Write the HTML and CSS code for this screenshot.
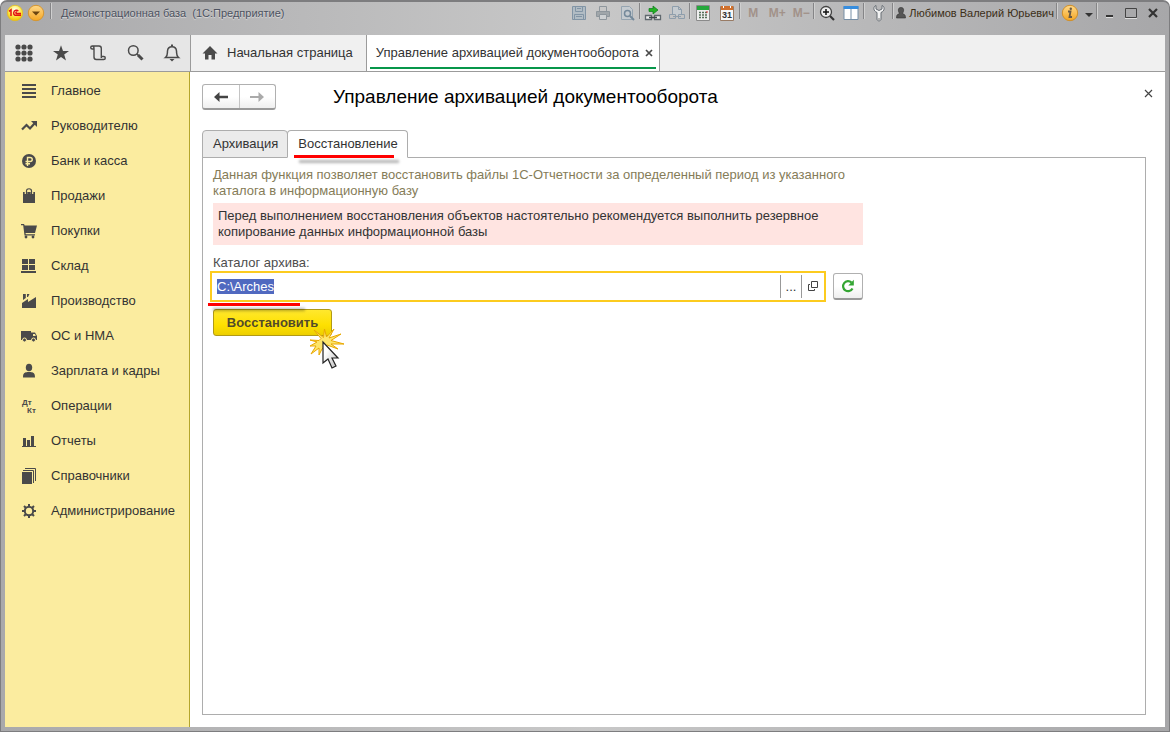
FILE: index.html
```html
<!DOCTYPE html>
<html lang="ru">
<head>
<meta charset="utf-8">
<title>Демонстрационная база (1С:Предприятие)</title>
<link rel="stylesheet" href="styles.css">
</head>
<body>
<div class="window">
  <header class="titlebar">
    <button class="tb-btn logo" aria-label="1С"><svg width="18" height="18" viewBox="0 0 18 18"><defs><radialGradient id="y" cx=".5" cy=".3" r=".7"><stop offset="0" stop-color="#fff"/><stop offset=".5" stop-color="#ffee58"/><stop offset="1" stop-color="#f0c000"/></radialGradient><linearGradient id="o" x2="0" y2="1"><stop offset="0" stop-color="#ffd98a"/><stop offset="1" stop-color="#f5a623"/></linearGradient></defs><circle cx="9" cy="9" r="7.7" fill="url(#y)" stroke="#e6bd20" stroke-width=".8"/><path d="M3 7.4L5 5.8V12M12.2 7.2C11.600 5.900 8 5.600 7.700 8.700C7.600 11 9 11.300 10 11.300H15M10.900 8.200C9.800 7.700 9.400 9.500 10.500 9.500H15" fill="none" stroke="#e31313" stroke-width="1.500"/></svg></button>
    <button class="tb-btn" aria-label="Меню"><svg width="18" height="18" viewBox="0 0 18 18"><circle cx="9" cy="9" r="7.700" fill="url(#o)" stroke="#d49632"/><path d="M5 7.500h8l-4 4z" fill="#6b4410"/></svg></button>
    <i class="sep"></i>
    <span class="app-title">Демонстрационная база&nbsp; (1С:Предприятие)</span>
    <div class="tools">
      <button class="tb-btn" aria-label="Сохранить"><svg width="16" height="16" viewBox="0 0 16 16" fill="none" stroke="#8194a5"><path d="M1.500 1.500h13v13h-13z" fill="#b1bcc4"/><path d="M4.500 1.500h7v5h-7zM3.500 9.500h9v5h-9zM5 11.500h6M6 3.500h4"/></svg></button>
      <button class="tb-btn" aria-label="Печать"><svg width="16" height="16" viewBox="0 0 16 16" fill="none" stroke="#8e969c"><path d="M4.500 6V1.500h7V6"/><path d="M1.500 6.500h13v5h-13z" fill="#a0a6aa"/><path d="M4.500 9.500h7v5h-7z" fill="#ced1d3"/></svg></button>
      <button class="tb-btn" aria-label="Просмотр"><svg width="16" height="16" viewBox="0 0 16 16" fill="none" stroke="#95a4b0"><path d="M2.500 1.500h8l3 3v10h-11z" fill="#c5cbd0"/><circle cx="8.500" cy="8.500" r="3" stroke="#74899a" stroke-width="1.500"/><path d="M11 11l4 4" stroke="#74899a" stroke-width="2"/></svg></button>
      <i class="sep"></i>
      <button class="tb-btn" aria-label="Перейти по ссылке"><svg width="18" height="16" viewBox="0 0 18 16" fill="none"><path d="M5 3.500h4V1l5 4-5 4V6.500H5z" fill="#24b324" stroke="#0a7a1b" stroke-width=".7"/><path d="M1.500 10.500h6v4h-6zM10.500 10.500h6v4h-6z" fill="#eee" stroke="#60686e" stroke-width="1.300"/><path d="M5 12.500h8" stroke="#40474c" stroke-width="1.500"/></svg></button>
      <button class="tb-btn" aria-label="Получить ссылку"><svg width="18" height="16" viewBox="0 0 18 16" fill="none" stroke="#8e9eac"><path d="M4.500 10V1.500h6l3 3V10M10.500 1.500v3h3" fill="#c5cbd0"/><path d="M1.500 9.500h6v4h-6zM10.500 9.500h6v4h-6zM5 11.500h8"/></svg></button>
      <i class="sep"></i>
      <button class="tb-btn" aria-label="Калькулятор"><svg width="14" height="16" viewBox="0 0 14 16"><path d="M.500.500h13v15H.500z" fill="#eee" stroke="#8a8a8a"/><path d="M1 1h12v4H1z" fill="#26a83c"/><path d="M3 7.500h8M3 10h8M3 12.500h8" stroke="#55705a" stroke-width="1.500" stroke-dasharray="2 1"/><path d="M10 7h2" stroke="#d33"/></svg></button>
      <button class="tb-btn" aria-label="Календарь"><svg width="14" height="16" viewBox="0 0 14 16"><path d="M.500 1.500h13v14H.500z" fill="#f7f7f7" stroke="#987b65"/><path d="M1 1h12v4H1z" fill="#d0702c"/><path d="M3.500 1v2M10.500 1v2" stroke="#fff"/><text x="7" y="13" text-anchor="middle" class="cal-num">31</text></svg></button>
      <i class="sep"></i>
      <button class="tb-btn mem">M</button><button class="tb-btn mem">M+</button><button class="tb-btn mem">M−</button>
      <i class="sep"></i>
      <button class="tb-btn" aria-label="Масштаб"><svg width="16" height="16" viewBox="0 0 16 16" fill="none"><circle cx="7" cy="7" r="5.500" fill="#eee" stroke="#444" stroke-width="1.300"/><path d="M11 11l4 4" stroke="#333" stroke-width="2.200"/><path d="M4 7h6M7 4v6" stroke="#111" stroke-width="1.500"/></svg></button>
      <button class="tb-btn" aria-label="Панели"><svg width="16" height="16" viewBox="0 0 16 16"><path d="M1 1.500h14v13H1z" fill="#fff" stroke="#778fa6"/><path d="M.500 1h15v3H.500z" fill="#368dde"/><path d="M8 4v11" stroke="#778fa6"/></svg></button>
      <i class="sep"></i>
      <button class="tb-btn wrench" aria-label="Сервис"><svg width="14" height="18" viewBox="0 0 14 18"><path d="M4 1.500C1 2.500 1 7 5 8.500V15c0 2.500 4 2.500 4 0V8.500C13 7 13 2.500 10 1.500V5L7 6.500 4 5z" fill="#f2f2f2" stroke="#666c73"/><circle cx="7" cy="15" r=".8" fill="#666"/></svg></button>
      <i class="sep"></i>
      <button class="tb-btn user"><svg width="10" height="12" viewBox="0 0 10 12"><path d="M5 .5c4 0 2.500 4.500 1.500 6 1.500 1 3 .5 3 4.500h-9c0-4 1.500-3.500 3-4.500-1-1.500-2.500-6 1.500-6z" fill="#555" stroke="#333" stroke-width=".6"/></svg>Любимов Валерий Юрьевич</button>
      <i class="sep"></i>
      <button class="tb-btn" aria-label="Справка"><svg width="18" height="18" viewBox="0 0 18 18"><circle cx="9" cy="9" r="7.700" fill="url(#o)" stroke="#cf8f2a"/><path d="M7 7.500h2.500L8.500 13h2.500" fill="none" stroke="#6a5a45" stroke-width="1.800"/><circle cx="9.800" cy="4.800" r="1.200" fill="#6a5a45"/></svg></button>
      <button class="tb-btn drop" aria-label="Ещё"><svg width="8" height="4" viewBox="0 0 8 4"><path d="M0 0h8L4 4z" fill="#333"/></svg></button>
      <i class="sep"></i>
      <button class="tb-btn win" aria-label="Свернуть"><svg width="12" height="12" viewBox="0 0 12 12"><path d="M3 9h7" stroke="#333" stroke-width="2"/><path d="M3 10.500h7" stroke="#ddd"/></svg></button>
      <button class="tb-btn win" aria-label="Развернуть"><svg width="12" height="12" viewBox="0 0 12 12"><path d="M.500 1.500h11v9H.500z" fill="none" stroke="#444"/><path d="M0 11.500h12" stroke="#ddd"/></svg></button>
      <button class="tb-btn win" aria-label="Закрыть"><svg width="12" height="12" viewBox="0 0 12 12"><path d="M2 2l8 8M10 2l-8 8" stroke="#333" stroke-width="2.200"/></svg></button>
    </div>
  </header>

  <div class="topbar">
    <div class="quick">
      <button aria-label="Меню функций"><svg width="18" height="18" viewBox="0 0 18 18" fill="#4a4a4a"><circle cx="3" cy="3" r="2.600"/><circle cx="9" cy="3" r="2.600"/><circle cx="15" cy="3" r="2.600"/><circle cx="3" cy="9" r="2.600"/><circle cx="9" cy="9" r="2.600"/><circle cx="15" cy="9" r="2.600"/><circle cx="3" cy="15" r="2.600"/><circle cx="9" cy="15" r="2.600"/><circle cx="15" cy="15" r="2.600"/></svg></button>
      <button aria-label="Избранное"><svg width="18" height="18" viewBox="0 0 18 18"><path d="M9 1.200l2 5.800h6l-4.800 3.600L14 16.500 9 13l-5 3.500 1.800-5.900L1 7h6z" fill="#4a4a4a"/></svg></button>
      <button aria-label="История"><svg width="18" height="18" viewBox="0 0 18 18" fill="none" stroke="#4a4a4a" stroke-width="1.400"><path d="M5 5H3.300C1.200 5 1.200 2 3.300 2H10c1.700 0 2.300.900 2.300 2.500V12.500M3.300 2C4.700 2 5 3 5 4.500V13c0 1.700.700 2.500 2.300 2.500H14.700c2.100 0 2.100-3 0-3h-2.400v1.500"/></svg></button>
      <button aria-label="Поиск"><svg width="18" height="18" viewBox="0 0 18 18" fill="none" stroke="#4a4a4a"><circle cx="7.300" cy="6.500" r="4.800" stroke-width="1.500"/><path d="M11 10l2 2" stroke-width="1.500"/><path d="M12 11l4.500 4.500" stroke-width="3"/></svg></button>
      <button aria-label="Уведомления"><svg width="18" height="18" viewBox="0 0 18 18" fill="none" stroke="#4a4a4a" stroke-width="1.500"><path d="M2.500 13.500C5 11.500 4.200 9.500 4.500 7 4.700 4 6.500 2.700 9 2.700S13.300 4 13.500 7c.3 2.500-.5 4.500 2 6.500z"/><path d="M9 .500v2" stroke-width="2"/><path d="M6.500 15h5L9 17.500z" fill="#4a4a4a" stroke="none"/></svg></button>
    </div>
    <nav class="page-tabs">
      <button class="page-tab home"><svg width="16" height="14" viewBox="0 0 16 14"><path d="M8 0l7.500 7.500H13V13.500H9.500V9h-3v4.500H3V7.500H.500z" fill="#4a4a4a"/></svg>Начальная страница</button>
      <div class="page-tab current"><span>Управление архивацией документооборота</span><button aria-label="Закрыть вкладку"><svg width="8" height="8" viewBox="0 0 8 8"><path d="M1 1l6 6M7 1L1 7" stroke="#4a4a4a" stroke-width="1.700"/></svg></button></div>
    </nav>
  </div>

  <div class="body">
    <nav class="sidebar">
      <a href="#"><svg viewBox="0 0 16 16"><path d="M1 2h14M1 6h14M1 10h14M1 14h14" stroke="#4a4a4a" stroke-width="2"/></svg>Главное</a>
      <a href="#"><svg viewBox="0 0 16 16"><path d="M1 11.500l4.500-4.500 3.500 3.500 4.500-5" fill="none" stroke="#4a4a4a" stroke-width="2.200"/><path d="M10 3h6v6z" fill="#4a4a4a"/></svg>Руководителю</a>
      <a href="#"><svg viewBox="0 0 16 16"><circle cx="8" cy="8" r="7" fill="#4a4a4a"/><path d="M6.500 13V4.500H9c3 0 3 4 0 4H4.500M4.500 10.800H9" fill="none" stroke="#fbec9f" stroke-width="1.400"/></svg>Банк и касса</a>
      <a href="#"><svg viewBox="0 0 16 16"><path d="M2 4h12v11H2z" fill="#4a4a4a"/><path d="M5 6V3.500C5 0 11 0 11 3.500V6" fill="none" stroke="#fbec9f" stroke-width="2.600"/><path d="M5.500 6V3C5.500 0 10.500 0 10.500 3V6" fill="none" stroke="#4a4a4a" stroke-width="1.200"/></svg>Продажи</a>
      <a href="#"><svg viewBox="0 0 16 16"><path d="M0 1h3l.7 1.500H16L14 10H4.500l.3 1.200H14V12.500H3.500L2.200 2.200H0z" fill="#4a4a4a"/><circle cx="5" cy="14" r="1.400" fill="#4a4a4a"/><circle cx="12" cy="14" r="1.400" fill="#4a4a4a"/></svg>Покупки</a>
      <a href="#"><svg viewBox="0 0 16 16"><path d="M1 1h6v5H1zM8 1h6v5H8zM1 7h6v5H1zM8 7h6v5H8zM0 13h15v2H0z" fill="#4a4a4a"/></svg>Склад</a>
      <a href="#"><svg viewBox="0 0 16 16"><path d="M1 15V10l6-4V9l8-5V15z" fill="#4a4a4a"/><path d="M2 1h2.800v4L2 7zM6 1h2.500L7 4H6z" fill="#4a4a4a"/></svg>Производство</a>
      <a href="#"><svg viewBox="0 0 16 16"><path d="M0 3h10v9H0zM10 4.500H14L16 8v4h-6z" fill="#4a4a4a"/><path d="M12 6h2l.8 2H12z" fill="#fbec9f"/><circle cx="3.500" cy="12" r="2" fill="#4a4a4a" stroke="#fbec9f"/><circle cx="12.500" cy="12" r="2" fill="#4a4a4a" stroke="#fbec9f"/></svg>ОС и НМА</a>
      <a href="#"><svg viewBox="0 0 16 16"><ellipse cx="8" cy="4.500" rx="3.200" ry="3.800" fill="#4a4a4a"/><path d="M2 14.500c0-5 2-5 4.500-5.500h3c2.500.500 4.500.500 4.500 5.500z" fill="#4a4a4a"/></svg>Зарплата и кадры</a>
      <a href="#"><svg viewBox="0 0 16 16" class="dtkt"><text x="1" y="7">Дт</text><text x="6" y="15">Кт</text></svg>Операции</a>
      <a href="#"><svg viewBox="0 0 16 16"><path d="M1 13h14v1H1zM2 5h3v9H2zM6 7h3v7H6zM10 3h3v11h-3z" fill="#4a4a4a"/></svg>Отчеты</a>
      <a href="#"><svg viewBox="0 0 16 16"><path d="M1 4h10v12H1z" fill="#4a4a4a"/><path d="M2 2.500h10.500V15M4 .500h10.500V13" fill="none" stroke="#4a4a4a"/></svg>Справочники</a>
      <a href="#"><svg viewBox="0 0 16 16" fill="none" stroke="#4a4a4a"><circle cx="8" cy="8" r="4.200" stroke-width="2"/><path d="M8 1v2.500M8 12.500V15M1 8h2.500M12.500 8H15M3 3l2 2M11 11l2 2M13 3l-2 2M5 11l-2 2" stroke-width="2"/></svg>Администрирование</a>
    </nav>

    <main class="main">
      <div class="heading">
        <div class="history">
          <button aria-label="Назад"><svg width="16" height="12" viewBox="0 0 16 12"><path d="M1 6l5.500-5v3.700H15v2.600H6.500V11z" fill="#444"/></svg></button>
          <button aria-label="Вперед"><svg width="16" height="12" viewBox="0 0 16 12"><path d="M15 6L9.500 1v4H1v2h8.500v4z" fill="#aaa"/></svg></button>
        </div>
        <h1>Управление архивацией документооборота</h1>
        <button class="close" aria-label="Закрыть"><svg width="9" height="9" viewBox="0 0 9 9"><path d="M1 1l7 7M8 1L1 8" stroke="#444" stroke-width="1.200"/></svg></button>
      </div>
      <div class="form-tabs">
        <button class="form-tab">Архивация</button>
        <button class="form-tab active">Восстановление<i class="mark mark-tab"></i></button>
      </div>
      <section class="panel">
        <p class="hint">Данная функция позволяет восстановить файлы 1С-Отчетности за определенный период из указанного каталога в информационную базу</p>
        <p class="warning">Перед выполнением восстановления объектов настоятельно рекомендуется выполнить резервное копирование данных информационной базы</p>
        <label for="dir">Каталог архива:</label>
        <div class="field-row">
          <div class="field">
            <input id="dir" type="text" value="C:\Arches" autofocus>
            <button aria-label="Выбрать">...</button>
            <button aria-label="Открыть"><svg width="11" height="11" viewBox="0 0 11 11" fill="none" stroke="#444"><path d="M3.500.500h6v6h-6z"/><path d="M2 3.500H.500v6h6V8"/></svg></button>
            <i class="mark mark-field"></i>
          </div>
          <button class="refresh" aria-label="Обновить"><svg width="14" height="14" viewBox="0 0 14 14"><path d="M11.500 9.500A5 5 0 1 1 10.500 3.500" fill="none" stroke="#33a532" stroke-width="2.200"/><path d="M12.800.800v5.700H7.300z" fill="#33a532"/></svg></button>
        </div>
        <button class="restore">Восстановить<svg class="pointer" width="36" height="42" viewBox="0 0 36 42"><defs><linearGradient id="c" x1="0" y1="0" x2="1" y2="1"><stop offset=".3" stop-color="#fff"/><stop offset="1" stop-color="#bbb"/></linearGradient></defs><path d="M12 10.500L5 2l9.500 7.500L15.500 1l2 8L25 1l-5 9 12-4-10 6.500L35 16l-13 0 7 5-11-4-5 4-3 6 0-7-8 6 5-8-6 0 7-4L1 12l9 .5z" fill="#fde56b" stroke="#e9a800"/><path d="M14 14v21l5-4 4 9 4-2-4-8h6z" fill="url(#c)" stroke="#222" stroke-width="1.200"/></svg></button>
      </section>
    </main>
  </div>
</div>
<script src="main.js"></script>
</body>
</html>
```
FILE: styles.css
```css
* { box-sizing: border-box; }
body { margin: 0; background: #fff; font: 13px/16px "Liberation Sans", Arial, sans-serif; color: #333; }
button { margin: 0; padding: 0; border: 0; background: none; font: inherit; color: inherit; display: flex; align-items: center; justify-content: center; }
svg { display: block; flex: none; }

.window { min-height: 100vh; display: flex; flex-direction: column; padding: 0 4px 4px; border: 1px solid #7d7d7f; border-top-width: 2px; border-radius: 7px 7px 0 0; background: linear-gradient(90deg, #a9a9ab, #c8c8c8 50%, #a7a7a9); }

.titlebar { display: flex; align-items: center; height: 33px; padding-bottom: 11px; font-size: 11px; }
.tb-btn { width: 24px; height: 22px; }
.logo { width: 19px; }
.sep { width: 2px; height: 16px; margin-bottom: 4px; border-left: 1px solid #858587; border-right: 1px solid #cfcfcf; }
.app-title { margin-left: 9px; color: #4c5260; text-shadow: 0 1px 1px #dedede; white-space: nowrap; }
.titlebar > .sep { margin-left: 2px; }
.tools { display: flex; align-items: center; margin-left: auto; padding-right: 1px; }
.mem { color: #a2928a; font-size: 12px; font-weight: bold; }
.cal-num { font: bold 9px "Liberation Sans", sans-serif; fill: #333; }
.wrench { width: 27px; }
.user { width: auto; gap: 3px; padding: 0 2px; color: #3b2e17; white-space: nowrap; }
.drop { width: 14px; padding-top: 4px; }
.win { width: 22px; }

.topbar { display: flex; height: 37px; background: #f0f0f0; border-bottom: 1px solid #9b9b9b; }
.quick { display: flex; width: 186px; background: #e6e6e6; border-right: 1px solid #9b9b9b; }
.quick button { flex: 1; }
.page-tabs { display: flex; }
.page-tab { display: flex; align-items: center; border-right: 1px solid #9b9b9b; white-space: nowrap; }
.home { gap: 9px; padding: 0 13px 0 11px; }
.current { position: relative; gap: 6px; padding: 0 6px 0 9px; background: #fff; }
.current::after { content: ""; position: absolute; left: 3px; right: 3px; bottom: 2px; height: 2px; background: #07964a; }

.body { flex: 1; display: flex; background: #fff; }
.sidebar { width: 185px; background: #fbec9f; border-right: 1px solid #b5a62c; padding-top: 1px; }
.sidebar a { display: flex; align-items: center; gap: 14px; height: 35px; padding-left: 16px; color: #333; text-decoration: none; white-space: nowrap; }
.sidebar svg { width: 16px; height: 16px; }
.dtkt { font: bold 8px "Liberation Sans", sans-serif; fill: #4a4a4a; overflow: visible; }

.main { flex: 1; display: flex; flex-direction: column; padding: 12px 19px 12px 12px; }
.heading { display: flex; align-items: center; margin-bottom: 20px; margin-right: -8px; }
.history { display: flex; width: 74px; height: 26px; border: 1px solid #b0b0b0; border-bottom: 2px solid #999; border-radius: 3px; background: linear-gradient(#fff 50%, #efefef); }
.history button { flex: 1; }
.history button + button { border-left: 1px solid #c4c4c4; }
h1 { margin: 0 0 0 57px; font-size: 19px; line-height: 24px; font-weight: normal; color: #000; }
.close { width: 12px; height: 12px; margin: 0 0 8px auto; }

.form-tabs { display: flex; position: relative; margin-bottom: -1px; }
.form-tab { position: relative; height: 28px; padding: 0 9px 0 10px; border: 1px solid #adadad; border-radius: 4px 4px 0 0; background: #ebebeb; }
.form-tab.active { background: #fff; border-bottom-color: #fff; margin-left: -1px; }
.mark { position: absolute; height: 3px; background: #f00; box-shadow: 5px 5px 3px rgba(0, 0, 0, .3); pointer-events: none; }
.mark-tab { left: 6px; right: 13px; bottom: -1px; }
.mark-field { left: -4px; top: 30px; width: 92px; z-index: 1; }

.panel { flex: 1; border: 1px solid #adadad; padding: 9px 10px; }
p { margin: 0; max-width: 650px; }
.hint { color: #857c58; }
.warning { margin: 4px 0 10px; padding: 5px; background: #ffe4e1; }
label { display: block; color: #4d4d4d; }
.field-row { display: flex; align-items: center; gap: 7px; max-width: 653px; margin-left: -3px; }
.field { position: relative; flex: 1; display: flex; align-items: center; height: 31px; border: 2px solid #fccb1f; }
.field input { flex: 1; min-width: 0; height: 27px; padding: 0 5px; border: 0; outline: 0; font: inherit; color: #333; background: transparent; }
.field input::selection { background: #5069c0; color: #fff; }
.field button { width: 21px; height: 23px; border-left: 1px solid #999; }
.field button + button { width: 23px; }
.refresh { width: 30px; height: 27px; border: 1px solid #b0b0b0; border-bottom: 2px solid #999; border-radius: 3px; background: linear-gradient(#fff 50%, #efefef); }
.restore { position: relative; width: 119px; height: 27px; margin-top: 7px; border: 1px solid #b19a16; border-radius: 3px; background: linear-gradient(#ffe82e, #fee000 60%, #edcf00); font-weight: bold; color: #524a2a; }
.pointer { position: absolute; left: 95px; top: 18px; }
```
FILE: main.js
```js
const dir = document.getElementById("dir");
dir.focus();
dir.select();
```
